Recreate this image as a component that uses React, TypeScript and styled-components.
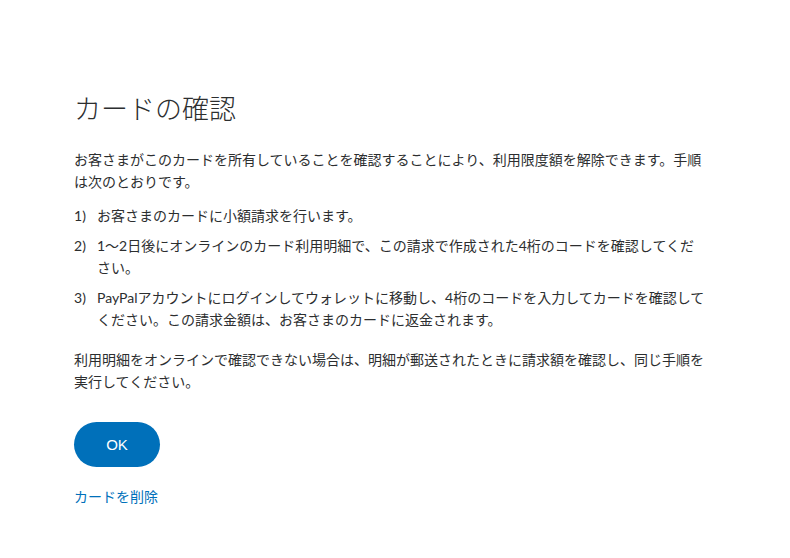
import React from "react";
import styled, { createGlobalStyle } from "styled-components";

const GlobalStyle = createGlobalStyle`
  html, body {
    margin: 0;
    padding: 0;
    background: #ffffff;
  }
  body {
    font-family: Lato, "Noto Sans CJK JP", "Noto Sans", sans-serif;
    color: #2c2e2f;
  }
`;

const Page = styled.main`
  width: 632px;
  padding: 90px 0 40px 74px;
`;

const Title = styled.h1`
  margin: 0 0 23px;
  font-family: "Noto Sans CJK JP", sans-serif;
  font-size: 27px;
  line-height: 36px;
  font-weight: 300;
  color: #2c2e2f;
`;

const Paragraph = styled.p<{ $gap: number }>`
  margin: 0 0 ${(p) => p.$gap}px;
  font-size: 14px;
  line-height: 22px;
`;

const Steps = styled.ol`
  list-style: none;
  margin: 0 0 18px;
  padding: 0;
  display: flex;
  flex-direction: column;
  gap: 8px;
`;

const Step = styled.li`
  font-size: 14px;
  line-height: 22px;
  padding-left: 23px;
  text-indent: -23px;
`;

const Marker = styled.span`
  display: inline-block;
  width: 23px;
  text-indent: 0;
`;

const Actions = styled.div`
  margin-top: 29px;
  display: flex;
  flex-direction: column;
  align-items: flex-start;
  gap: 20px;
`;

const PrimaryButton = styled.button`
  width: 86px;
  height: 45px;
  border: none;
  border-radius: 23px;
  background: #0070ba;
  color: #ffffff;
  font-family: "Liberation Sans", "Noto Sans", sans-serif;
  font-size: 15px;
  cursor: pointer;
  padding: 0;
`;

const TextLink = styled.a`
  font-size: 14px;
  line-height: 20px;
  color: #0070ba;
  text-decoration: none;
  cursor: pointer;
`;

const steps = [
  "お客さまのカードに小額請求を行います。",
  "1～2日後にオンラインのカード利用明細で、この請求で作成された4桁のコードを確認してください。",
  "PayPalアカウントにログインしてウォレットに移動し、4桁のコードを入力してカードを確認してください。この請求金額は、お客さまのカードに返金されます。",
];

export default function App() {
  return (
    <>
      <GlobalStyle />
      <Page>
        <Title>カードの確認</Title>
        <Paragraph $gap={12}>
          お客さまがこのカードを所有していることを確認することにより、利用限度額を解除できます。手順は次のとおりです。
        </Paragraph>
        <Steps>
          {steps.map((s, i) => (
            <Step key={i}>
              <Marker>{i + 1})</Marker>
              {s}
            </Step>
          ))}
        </Steps>
        <Paragraph $gap={0}>
          利用明細をオンラインで確認できない場合は、明細が郵送されたときに請求額を確認し、同じ手順を実行してください。
        </Paragraph>
        <Actions>
          <PrimaryButton type="button">OK</PrimaryButton>
          <TextLink href="#">カードを削除</TextLink>
        </Actions>
      </Page>
    </>
  );
}
